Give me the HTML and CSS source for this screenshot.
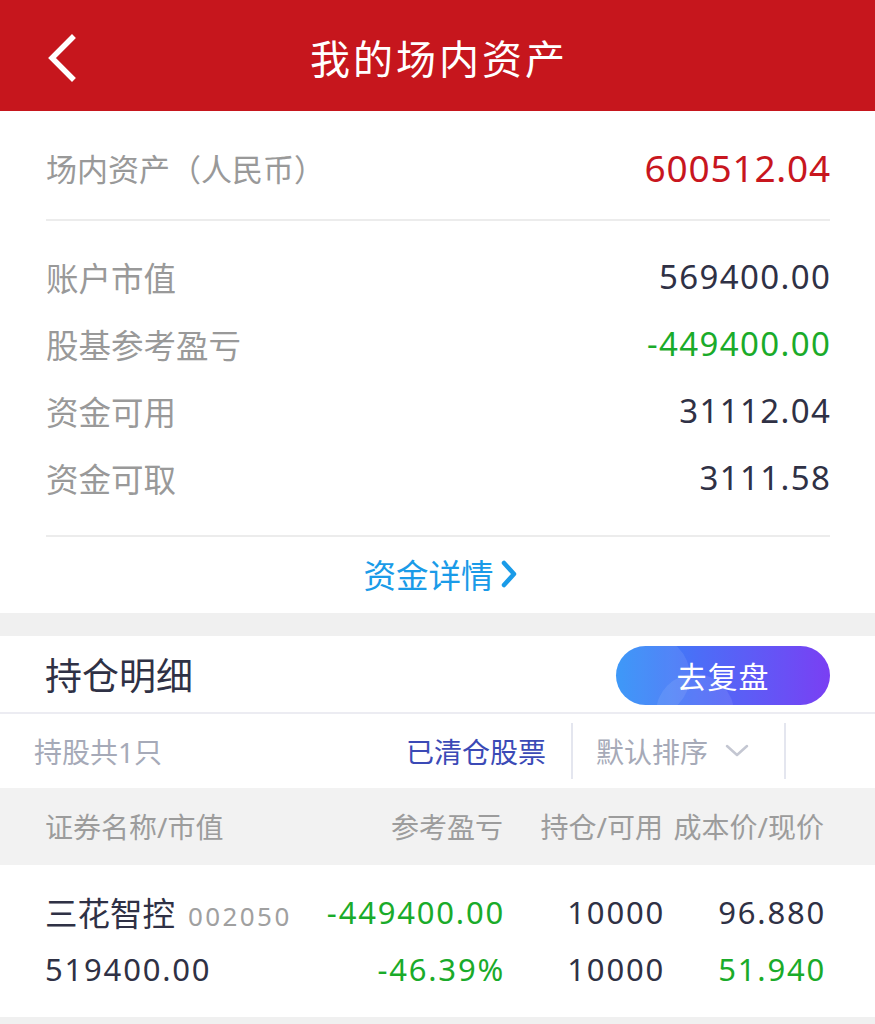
FILE: index.html
```html
<!DOCTYPE html>
<html lang="zh-CN">
<head>
    <meta charset="UTF-8">
    <meta name="viewport" content="width=device-width, initial-scale=1.0">
    <title>我的场内资产</title>
    <link rel="stylesheet" href="styles.css">
</head>
<body>
    <header class="nav">
        <a class="nav-back" href="#">
            <svg width="34" height="48" viewBox="0 0 34 48"><path d="M28 4 L8 24 L28 44" fill="none" stroke="#fff" stroke-width="5.5" stroke-linecap="square"/></svg>
        </a>
        <h1 class="nav-title">我的场内资产</h1>
        <span></span>
    </header>

    <section class="summary">
        <div class="total-row">
            <span class="total-label">场内资产（人民币）</span>
            <span class="total-value">600512.04</span>
        </div>
        <div class="detail-list">
            <div class="detail-row">
                <span class="label">账户市值</span>
                <span class="num">569400.00</span>
            </div>
            <div class="detail-row">
                <span class="label">股基参考盈亏</span>
                <span class="num down">-449400.00</span>
            </div>
            <div class="detail-row">
                <span class="label">资金可用</span>
                <span class="num">31112.04</span>
            </div>
            <div class="detail-row">
                <span class="label">资金可取</span>
                <span class="num">3111.58</span>
            </div>
        </div>
        <a class="more-link" href="#">资金详情
            <svg width="20" height="30" viewBox="0 0 20 30"><path d="M5 4 L15 15 L5 26" fill="none" stroke="#1a9be8" stroke-width="4.5" stroke-linecap="round" stroke-linejoin="round"/></svg>
        </a>
    </section>

    <section class="holdings">
        <div class="holdings-head">
            <h2>持仓明细</h2>
            <button class="review-btn">去复盘</button>
        </div>
        <div class="filter-bar">
            <span class="count">持股共1只</span>
            <a class="cleared" href="#">已清仓股票</a>
            <span class="sep"></span>
            <span class="sort">默认排序
                <svg width="26" height="16" viewBox="0 0 26 16"><path d="M3 3 L13 12 L23 3" fill="none" stroke="#c4c7d2" stroke-width="2.5" stroke-linecap="round" stroke-linejoin="round"/></svg>
            </span>
            <span class="sep"></span>
        </div>
        <div class="table-head">
            <span>证券名称/市值</span>
            <span class="right">参考盈亏</span>
            <span class="right">持仓/可用</span>
            <span class="right">成本价/现价</span>
        </div>
        <div class="stock">
            <span class="stock-name">三花智控<small>002050</small></span>
            <span class="right down">-449400.00</span>
            <span class="right">10000</span>
            <span class="right">96.880</span>

            <span>519400.00</span>
            <span class="right down">-46.39%</span>
            <span class="right">10000</span>
            <span class="right down">51.940</span>
        </div>
    </section>
</body>
</html>
```

FILE: styles.css
```css
body {
    margin: 0;
    background-color: #f0f0f0;
    font-family: "Noto Sans", "Noto Sans CJK SC", sans-serif;
    color: #2f3145;
}

a {
    text-decoration: none;
}

/* top bar */
.nav {
    height: 111px;
    background-color: #c6161d;
    display: grid;
    grid-template-columns: 1fr auto 1fr;
    align-items: center;
}

.nav-back {
    display: flex;
    align-items: center;
    padding-left: 44px;
    padding-top: 4px;
}

.nav-title {
    margin: 0;
    padding-top: 3px;
    color: #fff;
    font-size: 40px;
    font-weight: normal;
    letter-spacing: 3px;
    margin-right: -3px;
}

/* assets summary */
.summary {
    background-color: #fff;
    padding: 0 45px 0 46px;
    margin-bottom: 23px;
}

.label {
    color: #999;
    font-size: 32.5px;
}

.total-label {
    color: #999;
    font-size: 31px;
}

.total-row {
    height: 110px;
    display: flex;
    justify-content: space-between;
    align-items: center;
    border-bottom: 2px solid #ececec;
    padding-top: 4px;
    box-sizing: border-box;
}

.total-value {
    color: #c8161e;
    font-size: 37px;
    letter-spacing: 0.8px;
    margin-right: -1px;
}

.detail-list {
    padding: 22px 0 24px;
    border-bottom: 2px solid #ececec;
}

.detail-row {
    height: 67px;
    display: flex;
    justify-content: space-between;
    align-items: center;
}

.num {
    font-size: 33px;
    letter-spacing: 1.4px;
    margin-right: -1.4px;
}

.down {
    color: #1aab2a;
}

.more-link {
    height: 76px;
    display: flex;
    justify-content: center;
    align-items: center;
    gap: 5px;
    color: #1a9be8;
    font-size: 32.5px;
    padding-left: 6px;
    padding-bottom: 3px;
    box-sizing: border-box;
}

/* holdings */
.holdings {
    background-color: #fff;
}

.holdings-head {
    height: 76px;
    display: flex;
    justify-content: space-between;
    align-items: center;
    padding: 0 45px 0 45px;
    border-bottom: 2px solid #ececf2;
}

.holdings-head h2 {
    margin: 0;
    font-size: 37px;
    font-weight: normal;
    color: #2f3145;
}

.review-btn {
    position: relative;
    overflow: hidden;
    width: 214px;
    height: 59px;
    border: none;
    border-radius: 30px;
    background: linear-gradient(90deg, #2b8ff8 0%, #4d6cf7 40%, #6a4ff5 80%, #7a3ff3 100%);
    color: #fff;
    font-family: "Noto Sans CJK SC", sans-serif;
    font-size: 30px;
    letter-spacing: 1px;
    padding: 0;
    margin-top: 2px;
}

.review-btn::before,
.review-btn::after {
    content: "";
    position: absolute;
    border-radius: 50%;
    background-color: rgba(255, 255, 255, 0.09);
}

.review-btn::before {
    width: 80px;
    height: 80px;
    left: -6px;
    top: -10px;
}

.review-btn::after {
    width: 78px;
    height: 78px;
    left: 40px;
    top: 28px;
}

.filter-bar {
    height: 74px;
    display: flex;
    align-items: center;
    padding: 0 89px 0 34px;
    font-size: 28px;
}

.count {
    flex: 1;
    color: #a6aab8;
}

.cleared {
    color: #3b4ab6;
    padding-right: 25px;
}

.sep {
    width: 2px;
    height: 56px;
    background-color: #e4e6ef;
}

.sort {
    width: 211px;
    display: flex;
    align-items: center;
    gap: 16px;
    padding-left: 23px;
    box-sizing: border-box;
    color: #a6aab8;
}

.table-head,
.stock {
    display: grid;
    grid-template-columns: 1fr 190px 160px 161px;
    padding: 0 51px 0 45px;
}

.table-head {
    height: 77px;
    align-items: center;
    background-color: #f2f2f2;
    color: #9c9c9c;
    font-size: 28px;
    padding-bottom: 2px;
    box-sizing: border-box;
}

.right {
    text-align: right;
}

.stock {
    padding-top: 18px;
    padding-bottom: 20px;
    grid-auto-rows: 57px;
    align-items: center;
    font-size: 31px;
    letter-spacing: 1.8px;
    padding-right: 49px;
    border-bottom: 7px solid #f0f0f0;
}

.stock-name {
    font-size: 32.5px;
    letter-spacing: 0;
    white-space: nowrap;
}

.stock-name small {
    font-size: 26px;
    color: #a0a0a0;
    letter-spacing: 2.4px;
    margin-left: 13px;
}
```
